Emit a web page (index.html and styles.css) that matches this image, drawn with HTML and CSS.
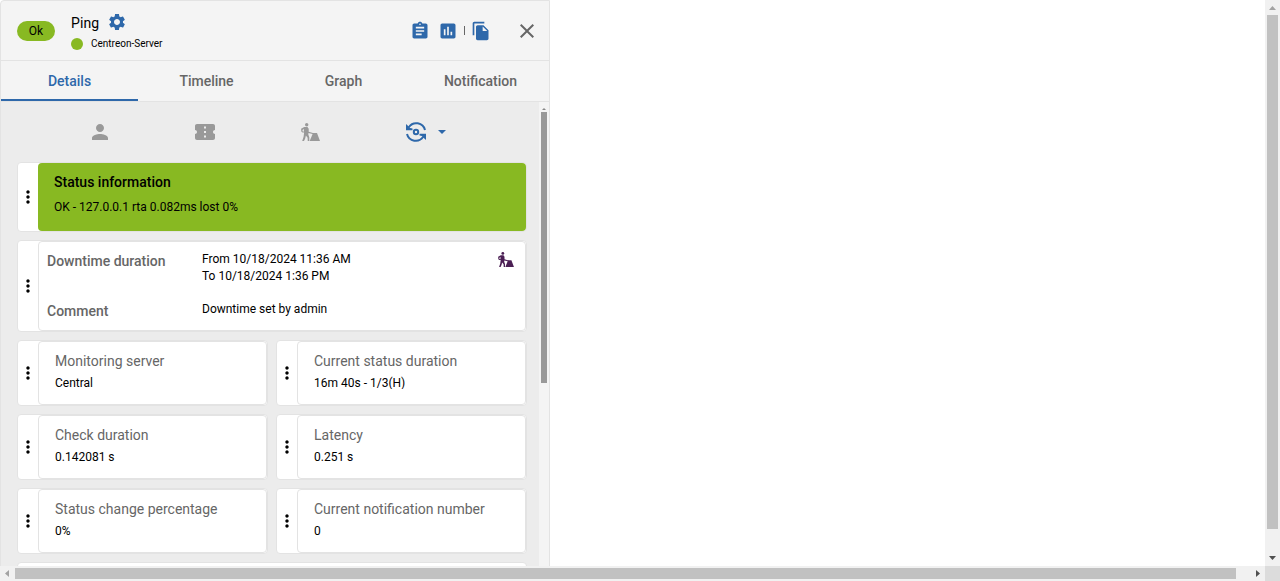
FILE: index.html
```html
<!DOCTYPE html>
<html lang="en">
<head>
<meta charset="utf-8">
<title>Ping</title>
<link rel="stylesheet" href="styles.css">
</head>
<body>
<svg class="defs" width="0" height="0">
  <symbol id="downtime" viewBox="0 0 19 18">
    <circle cx="5.700" cy="1.700" r="1.700"/>
    <path fill-rule="evenodd" d="M3.200 4h3.300l1.200 1.800v3l5 1.500v1l-5.200-1.200-.2 1.500 1 2.700v4.700H6.800l-.2-4.300-1.700-2.200-.8 3.200L3 18H1.200l1.400-4.300.5-4.200-1.600.1L.3 8.600.1 5.700zM3 6.100l-1.500.8v1.300l1.300.5z"/>
    <path d="M12 10h4l3 8H8.700z"/>
  </symbol>
  <symbol id="dots" viewBox="0 0 24 24">
    <path d="M12 8c1.100 0 2-.9 2-2s-.9-2-2-2-2 .9-2 2 .9 2 2 2zm0 2c-1.100 0-2 .9-2 2s.9 2 2 2 2-.9 2-2-.9-2-2-2zm0 6c-1.100 0-2 .9-2 2s.9 2 2 2 2-.9 2-2-.9-2-2-2z"/>
  </symbol>
</svg>
<div class="screen">
  <main class="viewport">
    <section class="panel">
      <header class="header">
        <span class="chip">Ok</span>
        <div class="resource">
          <div class="name">Ping
            <svg class="icon-20 blue" viewBox="0 0 24 24"><path d="M19.14 12.94c.04-.3.06-.61.06-.94 0-.32-.02-.64-.07-.94l2.03-1.58c.18-.14.23-.41.12-.61l-1.92-3.32c-.12-.22-.37-.29-.59-.22l-2.39.96c-.5-.38-1.03-.7-1.62-.94l-.36-2.54c-.04-.24-.24-.41-.48-.41h-3.84c-.24 0-.43.17-.47.41l-.36 2.54c-.59.24-1.13.57-1.62.94l-2.39-.96c-.22-.08-.47 0-.59.22L2.74 8.87c-.12.21-.08.47.12.61l2.03 1.58c-.05.3-.09.63-.09.94s.02.64.07.94l-2.03 1.58c-.18.14-.23.41-.12.61l1.92 3.32c.12.22.37.29.59.22l2.39-.96c.5.38 1.03.7 1.62.94l.36 2.54c.05.24.24.41.48.41h3.84c.24 0 .44-.17.47-.41l.36-2.54c.59-.24 1.13-.56 1.62-.94l2.39.96c.22.08.47 0 .59-.22l1.92-3.32c.12-.22.07-.47-.12-.61l-2.01-1.58zM12 15.6c-1.98 0-3.6-1.62-3.6-3.6s1.62-3.6 3.6-3.6 3.6 1.62 3.6 3.6-1.62 3.6-3.6 3.6z"/></svg>
          </div>
          <div class="parent"><i class="status-dot"></i>Centreon-Server</div>
        </div>
        <div class="shortcuts">
          <svg class="icon-20 blue" viewBox="0 0 24 24"><path d="M19 3h-4.180C14.400 1.840 13.300 1 12 1c-1.300 0-2.400.84-2.820 2H5c-1.100 0-2 .9-2 2v14c0 1.100.9 2 2 2h14c1.100 0 2-.9 2-2V5c0-1.100-.9-2-2-2zm-7 0c.55 0 1 .45 1 1s-.45 1-1 1-1-.45-1-1 .45-1 1-1zm2 14H7v-2h7v2zm3-4H7v-2h10v2zm0-4H7V7h10v2z"/></svg>
          <svg class="icon-20 blue" viewBox="0 0 24 24"><path d="M19 3H5c-1.100 0-2 .9-2 2v14c0 1.100.9 2 2 2h14c1.100 0 2-.9 2-2V5c0-1.100-.9-2-2-2zM9 17H7v-7h2v7zm4 0h-2V7h2v10zm4 0h-2v-4h2v4z"/></svg>
        </div>
        <i class="divider"></i>
        <svg class="icon-20 blue copy" viewBox="0 0 24 24"><path d="M16 1H4c-1.100 0-2 .9-2 2v14h2V3h12V1zm-1 4l6 6v10c0 1.100-.9 2-2 2H7.990C6.890 23 6 22.100 6 21l.01-14c0-1.100.89-2 1.990-2h7zm-1 7h5.500L14 6.500V12z"/></svg>
        <svg class="icon-24 close" viewBox="0 0 24 24"><path d="M19 6.410L17.590 5 12 10.590 6.410 5 5 6.410 10.590 12 5 17.590 6.410 19 12 13.410 17.590 19 19 17.590 13.410 12z"/></svg>
      </header>
      <nav class="tabs">
        <span class="tab active">Details</span>
        <span class="tab">Timeline</span>
        <span class="tab">Graph</span>
        <span class="tab">Notification</span>
      </nav>
      <div class="body">
        <div class="content">
          <div class="actions">
            <svg class="icon-24 grey" viewBox="0 0 24 24"><path d="M12 12c2.210 0 4-1.790 4-4s-1.790-4-4-4-4 1.790-4 4 1.790 4 4 4zm0 2c-2.670 0-8 1.340-8 4v2h16v-2c0-2.660-5.330-4-8-4z"/></svg>
            <svg class="icon-24 grey" viewBox="0 0 24 24"><path d="M22 10V6c0-1.110-.9-2-2-2H4c-1.100 0-1.990.89-1.990 2v4c1.100 0 1.990.9 1.990 2s-.89 2-2 2v4c0 1.100.9 2 2 2h16c1.100 0 2-.9 2-2v-4c-1.100 0-2-.9-2-2s.9-2 2-2zm-9 7.500h-2v-2h2v2zm0-4.500h-2v-2h2v2zm0-4.500h-2v-2h2v2z"/></svg>
            <svg class="worker grey"><use href="#downtime"/></svg>
            <div class="check">
              <svg class="refresh" viewBox="0 0 20 20"><path class="arc" d="M2.800 5.200A9 9 0 0 1 19 8M17.200 14.800A9 9 0 0 1 1 12"/><circle class="arc" cx="10" cy="10" r="2.200"/><path d="M0 2v6.200h6.500V6.600L4.200 5.900 2.200 4zM20 18v-6.200h-6.500v1.600l2.300.7 2 1.900z"/></svg>
              <svg class="caret" viewBox="0 0 8 4"><path d="M0 0h8L4 4z"/></svg>
            </div>
          </div>
          <div class="tiles">
            <article class="tile wide status">
              <div class="handle"><svg><use href="#dots"/></svg></div>
              <div class="card green"><h2>Status information</h2><p>OK - 127.0.0.1 rta 0.082ms lost 0%</p></div>
            </article>
            <article class="tile wide downtime">
              <div class="handle"><svg><use href="#dots"/></svg></div>
              <div class="card grid">
                <h2>Downtime duration</h2><p>From 10/18/2024 11:36 AM<br>To 10/18/2024 1:36 PM</p><svg class="worker small"><use href="#downtime"/></svg>
                <h2>Comment</h2><p>Downtime set by admin</p>
              </div>
            </article>
            <article class="tile"><div class="handle"><svg><use href="#dots"/></svg></div><div class="card"><h3>Monitoring server</h3><p>Central</p></div></article>
            <article class="tile"><div class="handle"><svg><use href="#dots"/></svg></div><div class="card"><h3>Current status duration</h3><p class="clipped">16m 40s - 1/3(H)</p></div></article>
            <article class="tile"><div class="handle"><svg><use href="#dots"/></svg></div><div class="card"><h3>Check duration</h3><p>0.142081 s</p></div></article>
            <article class="tile"><div class="handle"><svg><use href="#dots"/></svg></div><div class="card"><h3>Latency</h3><p>0.251 s</p></div></article>
            <article class="tile"><div class="handle"><svg><use href="#dots"/></svg></div><div class="card"><h3>Status change percentage</h3><p>0%</p></div></article>
            <article class="tile"><div class="handle"><svg><use href="#dots"/></svg></div><div class="card"><h3>Current notification number</h3><p>0</p></div></article>
            <article class="tile wide"></article>
          </div>
        </div>
        <div class="inner-scroll"><svg viewBox="0 0 4 2"><path d="M0 2h4L2 0z"/></svg><i></i></div>
      </div>
    </section>
  </main>
  <div class="vscroll">
    <svg viewBox="0 0 15 15"><path class="off" d="M4 10h7L7.500 6z"/></svg>
    <i></i>
    <svg viewBox="0 0 15 15"><path d="M4 5h7L7.500 9z"/></svg>
  </div>
  <div class="hscroll">
    <svg viewBox="0 0 15 15"><path class="off" d="M9 4v7L5 7.500z"/></svg>
    <i></i>
    <svg viewBox="0 0 15 15"><path d="M6 4v7l4-3.500z"/></svg>
  </div>
  <div class="corner"></div>
</div>
</body>
</html>
```
FILE: styles.css
```css
* { box-sizing: border-box; }
body { margin: 0; background: #fff; font-family: Roboto, sans-serif; color: #000; overflow: hidden; }
svg { display: block; flex: none; }
h2, h3, p { margin: 0; font-weight: 400; }
.defs { position: absolute; }
.screen { display: grid; grid-template: 566px 15px / 1265px 15px; width: 1280px; height: 581px; }
.viewport { overflow: hidden; }
.panel { width: 550px; height: 600px; border: 1px solid #e3e3e3; border-radius: 4px 0 0 0; background: #f4f4f4; overflow: hidden; }

.icon-20 { width: 20px; height: 20px; }
.icon-24 { width: 24px; height: 24px; }
.blue { fill: #2e68aa; }
.grey { fill: #999; }

.header { display: flex; align-items: center; height: 60px; padding: 0 10px 0 16px; border-bottom: 1px solid #e3e3e3; }
.chip { width: 38px; height: 20px; border-radius: 10px; background: #88b922; font-size: 12px; line-height: 21px; text-align: center; }
.resource { flex: 1; padding: 5px 0 0 16px; }
.name { display: flex; gap: 8px; height: 22px; align-items: center; font-size: 14px; line-height: 24px; letter-spacing: .1px; }
.name svg { margin-top: -1px; }
.parent { display: flex; align-items: center; gap: 8px; height: 21px; font-size: 10px; line-height: 20px; }
.status-dot { width: 12px; height: 12px; border-radius: 50%; background: #88b922; }
.shortcuts { display: flex; gap: 8px; }
.divider { width: 1px; height: 9px; margin: 0 6px; background: #666; }
.close { margin-left: 24px; fill: #666; }

.tabs { display: grid; grid-template-columns: repeat(4, 137px); height: 41px; border-bottom: 1px solid #e3e3e3; }
.tab { height: 40px; font-size: 14px; font-weight: 500; line-height: 40px; text-align: center; color: #666; }
.tab.active { color: #2e68aa; border-bottom: 2px solid #2e68aa; }

.body { display: flex; height: 498px; background: #ececec; }
.content { width: 538px; padding: 0 12px 0 16px; }
.actions { display: grid; grid-template-columns: 71px 105px 105px 105px 1fr; height: 60px; align-items: center; }
.actions > :first-child { grid-column: 2; }
.worker { width: 19px; height: 18px; margin: -1px 0 0 3px; }
.check { display: flex; align-items: center; gap: 12px; margin-left: 3px; }
.refresh { width: 20px; height: 20px; fill: #2e68aa; }
.arc { fill: none; stroke: #2e68aa; stroke-width: 2; }
.caret { width: 8px; height: 4px; fill: #2e68aa; }

.tiles { display: grid; grid-template-columns: 251px 251px; grid-template-rows: 70px 92px; grid-auto-rows: 66px; gap: 8px; }
.tile { display: flex; border: 1px solid #e3e3e3; border-radius: 4px; background: #fff; }
.wide { grid-column: span 2; }
.handle { display: grid; place-items: center; width: 20px; }
.handle svg { width: 20px; height: 20px; fill: #000; }
.card { flex: 1; padding: 10px 16px; border: 1px solid #e3e3e3; border-radius: 4px; }
.card h3 { font-size: 14px; line-height: 18px; color: #666; }
.card p { font-size: 12px; line-height: 17px; }
.card h3 + p { margin-top: 5px; }
.card .clipped { height: 14px; overflow: hidden; }
.card h2 { font-size: 14px; font-weight: 500; line-height: 20px; color: #666; }
.card.green { padding: 9px 16px; border: 0; background: #88b922; }
.green h2 { color: #000; }
.green p { margin-top: 7px; }
.card.grid { display: grid; grid-template-columns: 155px 1fr 16px; grid-template-rows: 50px 30px; padding: 9px 11px 0 8px; }
.worker.small { width: 16px; height: 15px; margin: 1px 0 0; fill: #4b1f54; }

.inner-scroll { width: 10px; padding: 6px 3px 0 2px; background: #f4f4f4; }
.inner-scroll svg { width: 4px; height: 2px; margin-left: 1px; fill: #888; }
.inner-scroll i { display: block; width: 6px; height: 271px; margin-top: 2px; background: #999; }

.vscroll, .hscroll { display: flex; background: #f1f1f1; fill: #505050; }
.vscroll { flex-direction: column; }
.vscroll svg, .hscroll svg { width: 15px; height: 15px; }
.off { fill: #a3a3a3; }
.vscroll i { width: 11px; height: 514px; margin: 0 2px auto; background: #c1c1c1; }
.hscroll i { width: 1221px; height: 11px; margin: 2px auto 2px 0; background: #c1c1c1; }
.corner { background: #dcdcdc; }
```
